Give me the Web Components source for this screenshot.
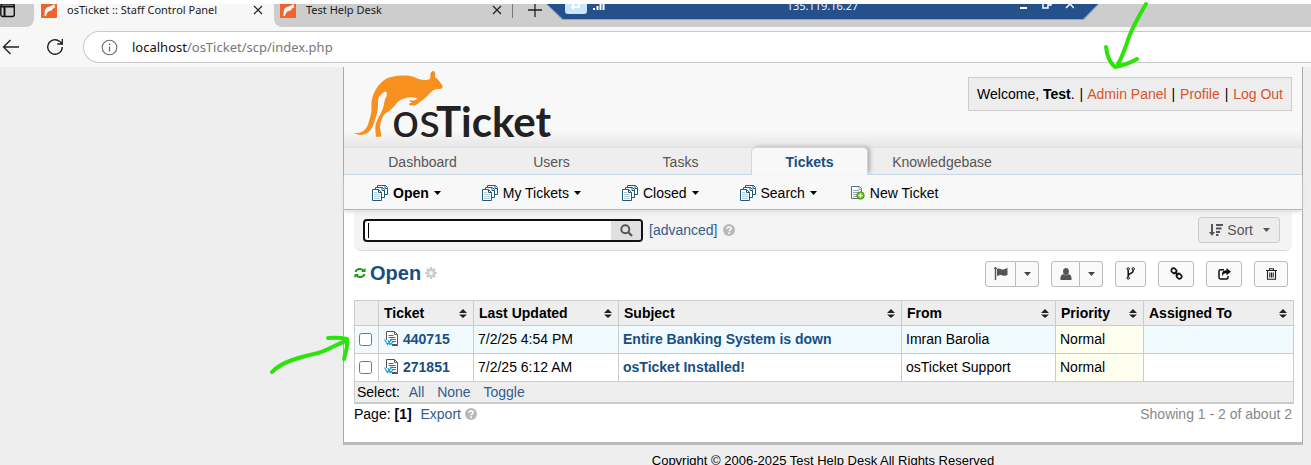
<!DOCTYPE html>
<html lang="en">
<head>
<meta charset="utf-8">
<title>osTicket :: Staff Control Panel</title>
<style>
html,body{margin:0;height:100%;overflow:hidden}
body{background:#eee;font:14px/16px "Liberation Sans",Arial,sans-serif;color:#000;position:relative}
</style>
</head>
<body>
<browser-chrome></browser-chrome>
<ot-page>
  <ot-header slot="head"></ot-header>
  <ot-nav slot="head"></ot-nav>
  <ot-subnav slot="head"></ot-subnav>
  <ot-search></ot-search>
  <ot-toolbar></ot-toolbar>
  <ot-queue></ot-queue>
  <ot-pager></ot-pager>
</ot-page>
<ot-footer>Copyright © 2006-2025 Test Help Desk All Rights Reserved</ot-footer>
<ink-arrows></ink-arrows>
<script>
const define = (name, html, setup) => customElements.define(name, class extends HTMLElement {
  connectedCallback() {
    if (this.shadowRoot) return;
    const root = this.attachShadow({mode: 'open'});
    const t = document.createElement('template');
    t.innerHTML = html;
    root.append(t.content.cloneNode(true));
    if (setup) setup(this, root);
  }
});

const stack = `<g stroke="#1b5c7e" fill="#fff"><path d="M5.500 .5h8l2 2v7h-10zM13 .5v3h2.500"/><path d="M3.500 2.500h7l2 2v8h-9zM10 2.500v3h2.500"/><path d="M.5 4.500h6l3 3v8h-9z"/></g><path d="M6.500 4.500v3h3" fill="none" stroke="#1b5c7e"/><path d="M2 7.500h3M2 9.500h6M2 11.500h6M2 13.500h6" stroke="#b6c8d0"/>`;
const icons = {
  panel: [16,16,`<rect x=".8" y="2" width="13.500" height="12.500" rx="2" fill="none" stroke="#111" stroke-width="1.400"/><path d="M1 4.500h13M4.500 4.500v10" stroke="#111" stroke-width="2"/>`],
  logo: [16,16,`<rect width="16" height="16" rx="1" fill="#f1632a"/><path d="M1.500 14c2 0 2.200-2 2.200-4C3.800 6.500 6 5 9 4.500L12 3l2-1-.5 2 1 1.500-2 .5-2 2.500-2 .5C7 9.500 5.500 11 5 14l-1 .3c-.5-1 .3-2.300.3-2.300s-1 2.300-2.800 2z" fill="#fff"/>`],
  close: [10,10,`<path d="M1 1l8 8M9 1L1 9" stroke="#222" stroke-width="1.200"/>`],
  plus: [14,14,`<path d="M7 0v14M0 7h14" stroke="#222" stroke-width="1.300"/>`],
  back: [18,16,`<path d="M17 8H2M8.500 1L1.500 8l7 7" fill="none" stroke="#222" stroke-width="1.400"/>`],
  reload: [18,18,`<path d="M16.300 9A7.300 7.300 0 1 1 13.800 3.500L16 5.500M16.300 1v5h-5" fill="none" stroke="#222" stroke-width="1.400"/>`],
  info: [17,17,`<circle cx="8.500" cy="8.500" r="7.300" fill="none" stroke="#6b6b6b" stroke-width="1.100"/><path d="M8.500 7.500v5M8.500 4.500v1.500" stroke="#6b6b6b" stroke-width="1.300"/>`],
  stack: [16,16,stack],
  newdoc: [15,16,`<path d="M1.500 1.500h8l2 2v10h-10z" fill="#fff" stroke="#5d6f86"/><path d="M9 1.500v3h2.500M3 5.500h6M3 7.500h6M3 9.500h4M3 11.500h4" stroke="#92a5bb" fill="none"/><circle cx="10.500" cy="10.500" r="3.800" fill="#68b51c" stroke="#3f8a10" stroke-width=".7"/><path d="M10.500 8.300v4.400M8.300 10.500h4.400" stroke="#e9ffd4" stroke-width="1.400"/>`],
  caret: [7,4,`<path d="M0 0h7L3.500 4z" fill="currentColor"/>`],
  search: [13,13,`<circle cx="5.300" cy="5.300" r="4" fill="none" stroke="#555" stroke-width="1.900"/><path d="M8.300 8.300l3.700 3.700" stroke="#555" stroke-width="2.200"/>`],
  help: [12,12,`<circle cx="6" cy="6" r="6" fill="#b9b9b9"/><path d="M4 4.800C4 2.300 8.200 2.500 8 4.700 7.900 5.900 6.100 5.900 6.100 7.300M6.100 8.300v1.600" fill="none" stroke="#fff" stroke-width="1.600"/>`],
  sort: [14,14,`<path d="M3 1v9" stroke="#555" stroke-width="2"/><path d="M0 9h6l-3 4zM7 1h7v2H7zM7 4.500h5.500v2H7zM7 8h4v2H7zM7 11h2.500v2H7z" fill="#555"/>`],
  refresh: [12,12,`<path d="M1.500 5C2.500 1.500 7 1 9.500 3.500M10.500 7C9.500 10.500 5 11 2.500 8.500" fill="none" stroke="#12a012" stroke-width="1.900"/><path d="M11.500 .8v4.300H7.200zM.5 11.200V6.900h4.300z" fill="#12a012"/>`],
  gear: [12,12,`<circle cx="6" cy="6" r="3.200" fill="none" stroke="#ccc" stroke-width="2.600"/><path d="M6 0v2M6 10v2M0 6h2M10 6h2M1.800 1.800l1.400 1.400M8.800 8.800l1.400 1.400M1.800 10.200l1.400-1.400M8.800 3.200l1.400-1.400" stroke="#ccc" stroke-width="2.200"/>`],
  flag: [14,13,`<path d="M1.500 1v12" stroke="#555" stroke-width="1.400"/><circle cx="1.500" cy="1.300" r="1.200" fill="#555"/><path d="M3 2c3-1.500 4 1 6.500.5L13.500 1v7C10 10 8.500 7.500 6 8L3 9z" fill="#555"/>`],
  user: [12,12,`<ellipse cx="6" cy="3.500" rx="2.900" ry="3.500" fill="#555"/><path d="M.5 12C0 8 2 6.300 3.300 6.300c1.500 1.300 3.900 1.300 5.400 0C10 6.300 12 8 11.500 12z" fill="#555"/>`],
  fork: [9,13,`<path d="M2.200 2v9M7.200 2v2c0 2.500-5 2-5 5" fill="none" stroke="#111" stroke-width="1.500"/><g fill="#fff" stroke="#111"><circle cx="2.200" cy="1.900" r="1.200"/><circle cx="7.200" cy="1.900" r="1.200"/><circle cx="2.200" cy="11" r="1.200"/></g>`],
  link: [13,13,`<g fill="none" stroke="#111" stroke-width="1.700"><rect x="1.200" y="1.600" width="5.400" height="4.400" rx="2.200" transform="rotate(45 3.900 3.800)"/><rect x="6.400" y="7" width="5.400" height="4.400" rx="2.200" transform="rotate(45 9.100 9.200)"/><path d="M4.800 4.800l3.500 3.500"/></g>`],
  share: [13,12,`<path d="M6 1.800H2.500Q1 1.800 1 3.300v6Q1 11 2.500 11h6Q10 11 10 9.500V8" fill="none" stroke="#111" stroke-width="1.500"/><path d="M8.500 0L13 3.700 8.500 7.200V5.200C6 5 5 6 4.500 8.500 3.300 5 4.500 2.200 8.500 2.200z" fill="#111"/>`],
  trash: [11,12,`<path d="M0 2.500h11M3.500 2.500V.8h4v1.700M1.500 3v8.200h8V3M3.800 4.500v5M5.500 4.500v5M7.200 4.500v5" fill="none" stroke="#222" stroke-width="1.100"/>`],
  updown: [8,9,`<path d="M0 4L4 0l4 4zM0 5.500h8L4 9z" fill="#222"/>`],
  ticket: [15,15,`<path d="M2.500 9V.5h8l3 3v10h-6" fill="#fff" stroke="#555"/><path d="M10.500 .5v3h3M4.500 4.500h5M4.500 6.500h7M6 8.500h6M8 10.500h4" stroke="#666" fill="none"/><path d="M8 14.500h6" stroke="#555"/><path d="M.5 8.500l3 5 5-6M4 9l2 4.500L9 11" fill="none" stroke="#1d9fd6" stroke-width="1.200"/>`]
};
customElements.define('ot-icon', class extends HTMLElement {
  connectedCallback() {
    if (this.shadowRoot) return;
    const [w, h, body] = icons[this.getAttribute('name')];
    this.attachShadow({mode: 'open'}).innerHTML =
      `<style>:host{display:inline-flex;flex:none}svg{display:block}</style><svg width="${w}" height="${h}" viewBox="0 0 ${w} ${h}" aria-hidden="true">${body}</svg>`;
  }
});

define('remote-bar', `<style>
:host{display:block;width:553px;height:16px;overflow:hidden;background:#8fa5c6;clip-path:polygon(0 0,100% 0,538px 100%,16px 100%)}
.in{box-sizing:border-box;height:15px;background:#24508c;clip-path:polygon(1px 0,552px 0,537px 100%,17px 100%);display:grid;grid-template-columns:1fr auto 1fr;color:#fff;font:11px/12px "Open Sans",sans-serif}
.l{padding-left:19px;display:flex;gap:6px}
.pin{width:22px;height:10px;background:#cbe5fb;border-radius:0 0 3px 3px}
.t{margin-top:-4px}
.r{display:flex;justify-content:flex-end;padding-right:25px}
svg{display:block}
</style><div class="in"><div class="l"><span class="pin"><svg width="22" height="10"><path d="M6 3h8M14 0v4M8 0v5" stroke="#fff" stroke-width="2"/></svg></span><svg width="12" height="7"><path d="M1 4v2M4.500 2v4M7.500 0v6M10.500 0v6" stroke="#fff" stroke-width="2"/></svg></div><span class="t">135.119.16.27</span>
<div class="r"><svg width="54" height="6"><path d="M0 4h7" stroke="#fff" stroke-width="2"/><path d="M23 0v4h5V0M28 1h3V0M46 4l4-4 4 4" fill="none" stroke="#fff" stroke-width="1.500"/></svg></div></div>`);

define('browser-chrome', `<style>
:host{display:block;background:#f7f7f7;padding-top:4px;box-shadow:inset 0 4px #fff;font-family:"Noto Sans","Open Sans",sans-serif;color:#1b1b1b;position:relative}
.tabs{display:flex;height:23px;overflow:hidden;font-size:11px;line-height:12px}
.tabs>*{box-sizing:border-box;height:23px;padding-bottom:11px;display:flex;align-items:center}
.first{width:34px;background:#cdcdcd;border-radius:0 0 8px 0}
.tab{width:240px;padding-left:7px;padding-right:11px;gap:10px}
.tab span{flex:1;white-space:nowrap}
.rest{flex:1;background:#cdcdcd;border-radius:0 0 0 8px}
.rest .tab{display:flex;align-items:center;width:239px;box-sizing:border-box;padding-left:6px;padding-right:10px;border-right:1px solid #777;height:16px}
.rest ot-icon[name=plus]{margin-left:15px}
.bar{display:flex;align-items:center;height:40px}
.bar>ot-icon[name=back]{margin-left:2px;width:44px}
.bar>ot-icon[name=reload]{width:37px}
.url{box-sizing:border-box;flex:1;height:32px;border:1px solid #c9c9c9;border-right:0;border-radius:16px 0 0 16px;background:#fff;display:flex;align-items:center;gap:14px;padding-left:17px;font-size:13px;color:#777}
.url b{font-weight:400;color:#111}
remote-bar{position:absolute;left:546px;top:4px}
</style><div class="tabs"><div class="first"><ot-icon name="panel"></ot-icon></div>
<div class="tab"><ot-icon name="logo"></ot-icon><span>osTicket :: Staff Control Panel</span><ot-icon name="close"></ot-icon></div>
<div class="rest"><div class="tab"><ot-icon name="logo"></ot-icon><span>Test Help Desk</span><ot-icon name="close"></ot-icon></div><ot-icon name="plus"></ot-icon></div></div>
<div class="bar"><ot-icon name="back"></ot-icon><ot-icon name="reload"></ot-icon><div class="url"><ot-icon name="info"></ot-icon><span><b>localhost</b>/osTicket/scp/index.php</span></div></div>
<remote-bar></remote-bar>`);

define('ot-page', `<style>
:host{display:block;box-sizing:border-box;max-width:960px;margin:0 8px 0 auto;background:#fff;border:1px solid #aaa;border-top:0;border-bottom:3px solid #bbb}
.body{padding:0 8px 18px 10px}
</style><slot name="head"></slot><div class="body"><slot></slot></div>`);

define('ot-header', `<style>
:host{display:flex;justify-content:space-between;align-items:flex-start;height:80px;background:linear-gradient(#f8f8f8 80%,#e6e6e6);padding:0 10px 0 9px}
.logo{position:relative;width:200px;height:76px;display:block;color:#222}
svg{position:absolute;left:0;top:1px}
.word{position:absolute;left:39px;top:28px;display:flex;align-items:baseline;line-height:48px;white-space:nowrap}
.os{font:400 48px/48px Lato,sans-serif}
.tk{font:bold 42px/48px "Lato",sans-serif;margin-left:-4px}
.me{margin-top:10px;box-sizing:border-box;height:34px;padding:8px;border:1px solid #ccc;background:#ededed;font-size:14px;line-height:16px;white-space:nowrap}
.me i{font-style:normal;margin:0 1px}
.me a{color:#d9532c;text-decoration:none}
</style><a class="logo" href="#" aria-label="osTicket"><span class="word"><span class="os">os</span><span class="tk">Ticket</span></span>
<svg width="92" height="72" viewBox="7 9 276 216" fill="#f7901e"><path d="M10 203C32 208 48 196 54 172C60 150 64 142 62 122C62 90 80 58 105 42C125 32 165 28 190 36C205 42 215 48 232 44C240 42 239 38 239 32C239 24 242 16 250 18C255 22 254 30 253 36C262 42 268 52 276 62C277 70 270 73 262 72C252 72 244 78 236 86C226 98 215 106 206 112C200 120 190 124 176 120C172 116 180 114 186 112C178 112 172 108 180 106C190 108 196 106 200 100C180 92 155 100 142 110C130 125 115 140 103 146C94 155 90 170 88 185C88 200 95 208 90 215L75 215C77 205 72 195 75 178C80 160 92 145 97 130C101 118 100 105 108 92C110 84 108 79 102 80C92 86 82 95 82 110C84 130 78 150 72 168C66 190 55 206 36 209C26 211 16 208 10 203Z"/></svg></a>
<div class="me">Welcome, <strong>Test</strong>. <i>|</i> <a href="#">Admin Panel</a> <i>|</i> <a href="#">Profile</a> <i>|</i> <a href="#">Log Out</a></div>`);

define('ot-nav', `<style>
:host{display:flex;gap:12px;height:28px;box-sizing:border-box;padding-left:20px;background:#eee;box-shadow:inset 0 1px #e2e2e2,inset 0 -1px #c5d9e8}
a{width:117px;box-sizing:border-box;text-align:center;line-height:30px;color:#555;text-decoration:none}
a:last-child{width:124px}
.on{background:#f8f8f8;border:1px solid #c5d9e8;border-bottom:0;border-radius:5px 5px 0 0;color:#184e81;font-weight:bold;line-height:28px;box-shadow:3px -1px 4px -1px #aaa;clip-path:inset(-4px -8px 0 -4px)}
</style><a href="#">Dashboard</a><a href="#">Users</a><a href="#">Tasks</a><a class="on" href="#">Tickets</a><a href="#">Knowledgebase</a>`);

define('ot-subnav', `<style>
:host{display:flex;gap:33px;height:35px;box-sizing:border-box;align-items:center;padding:2px 0 0 28px;background:#f8f8f8;border-bottom:1px solid #b5b5b5;position:relative;box-shadow:0 2px 4px #ddd}
a{display:flex;align-items:center;gap:5px;padding-right:8px;color:#000;text-decoration:none;white-space:nowrap}
a:nth-of-type(4){padding-right:0}
</style><a href="#"><ot-icon name="stack"></ot-icon><b>Open</b><ot-icon name="caret"></ot-icon></a><a href="#"><ot-icon name="stack"></ot-icon>My Tickets<ot-icon name="caret"></ot-icon></a><a href="#"><ot-icon name="stack"></ot-icon>Closed<ot-icon name="caret"></ot-icon></a><a href="#"><ot-icon name="stack"></ot-icon>Search<ot-icon name="caret"></ot-icon></a><a href="#"><ot-icon name="newdoc"></ot-icon>New Ticket</a>`);

define('ot-search', `<style>
:host{display:flex;align-items:center;height:41px;box-sizing:border-box;margin-right:2px;padding:0 12px 0 9px;background:#f4f4f4;border-bottom:1px dotted #bbb;border-radius:0 0 8px 8px}
.box{display:flex;box-sizing:border-box;width:280px;height:23px;border:2px solid #111;border-radius:4px;background:#fff;overflow:hidden;align-items:center}
.box i{width:1px;height:15px;margin-left:3px;background:#000}
input{flex:1;min-width:0;border:0;outline:0;padding:0 2px;background:none;font:inherit}
.box button{width:30px;height:19px;border:0;padding:0;background:#e0e0e0;display:flex;align-items:center;justify-content:center}
a{color:#345c8c;text-decoration:none;margin:0 5px 0 6px}
.sort{margin-left:auto;display:flex;align-items:center;height:26px;box-sizing:border-box;border:1px solid #ccc;border-radius:3px;background:#ececec;color:#555;font:inherit;padding:0 9px 0 10px;gap:4px}
.sort ot-icon[name=caret]{margin-left:6px}
</style><form class="box" role="search"><i></i><input type="text" aria-label="Search tickets"><button type="button" aria-label="Search"><ot-icon name="search"></ot-icon></button></form><a href="#">[advanced]</a><ot-icon name="help"></ot-icon><button class="sort" type="button"><ot-icon name="sort"></ot-icon>Sort<ot-icon name="caret"></ot-icon></button>`);

define('ot-toolbar', `<style>
:host{display:flex;align-items:center;height:49px;gap:12px;padding:0 6px 4px 0;box-sizing:border-box}
h2{margin:0 auto 0 0;padding-bottom:2px;font-size:20px;line-height:24px;display:flex;align-items:center;gap:4px;color:#184e81}
a{color:inherit;text-decoration:none}
div{display:flex}
button{box-sizing:border-box;height:26px;border:1px solid #bbb;border-radius:3px;background:#fafafa;padding:0;display:flex;align-items:center;justify-content:center;color:#444}
.m{width:31px;border-radius:3px 0 0 3px}.n{width:29px;border-radius:3px 0 0 3px}
.d{width:23px;border-left:0;border-radius:0 3px 3px 0}
.s{width:31px}.w{width:36px}.t{width:34px}
</style><h2><ot-icon name="refresh"></ot-icon><a href="#">Open</a><ot-icon name="gear"></ot-icon></h2>
<div><button class="m" aria-label="Flag"><ot-icon name="flag"></ot-icon></button><button class="d" aria-label="Flag options"><ot-icon name="caret"></ot-icon></button></div>
<div><button class="n" aria-label="Assign"><ot-icon name="user"></ot-icon></button><button class="d" aria-label="Assign options"><ot-icon name="caret"></ot-icon></button></div>
<button class="s" aria-label="Merge"><ot-icon name="fork"></ot-icon></button><button class="w" aria-label="Link"><ot-icon name="link"></ot-icon></button><button class="w" aria-label="Transfer"><ot-icon name="share"></ot-icon></button><button class="t" aria-label="Delete"><ot-icon name="trash"></ot-icon></button>`);

define('ot-queue', `<style>
:host{display:block}
table{width:100%;border-collapse:collapse;table-layout:fixed;border-bottom:2px solid #ccc}
th,td{border:1px solid #ccc;padding:0 4px;text-align:left;white-space:nowrap}
th{height:24px;background:#eee;padding:0 6px 0 5px}
th>div{display:flex;justify-content:space-between;align-items:center}
tbody td{height:25px;padding-bottom:2px}
tbody tr:first-child td{background:#f0faff}
tbody tr td.p,tbody tr:first-child td.p{background:#fffff0}
tbody td.c{padding:0 2px 2px 0;text-align:center}
input{width:13px;height:13px;margin:0;vertical-align:middle}
a{color:#184e81;text-decoration:none}
td a{font-weight:bold}
.n{display:flex;align-items:center;gap:4px;padding-left:1px}
tfoot td{height:20px;background:#eee;padding:0 2px;border-bottom:2px solid #ccc}
tfoot a{font-weight:400;margin-left:9px;color:#345c8c}
tfoot a:first-of-type{margin-left:5px}
</style><table><colgroup><col style="width:24px"><col style="width:95px"><col style="width:145px"><col><col style="width:154px"><col style="width:88px"><col style="width:150px"></colgroup>
<thead><tr><th></th></tr></thead><tbody></tbody><tfoot><tr><td colspan="7">Select: <a href="#">All</a> <a href="#">None</a> <a href="#">Toggle</a></td></tr></tfoot></table>`, (el, root) => {
  root.querySelector('thead tr').insertAdjacentHTML('beforeend', ['Ticket','Last Updated','Subject','From','Priority','Assigned To'].map(t => `<th><div>${t}<ot-icon name="updown"></ot-icon></div></th>`).join(''));
  root.querySelector('tbody').innerHTML = [
    ['440715','7/2/25 4:54 PM','Entire Banking System is down','Imran Barolia'],
    ['271851','7/2/25 6:12 AM','osTicket Installed!','osTicket Support']
  ].map(r => `<tr><td class="c"><input type="checkbox" aria-label="Select ticket ${r[0]}"></td><td><div class="n"><ot-icon name="ticket"></ot-icon><a href="#">${r[0]}</a></div></td><td>${r[1]}</td><td><a href="#">${r[2]}</a></td><td>${r[3]}</td><td class="p">Normal</td><td></td></tr>`).join('');
});

define('ot-pager', `<style>
:host{display:flex;align-items:center;height:20px;padding-right:2px;gap:4px}
a{color:#345c8c;text-decoration:none;margin-left:5px}
span{margin-left:auto;color:#888}
</style><div>Page: <b>[1]</b> <a href="#">Export</a></div><ot-icon name="help"></ot-icon><span>Showing 1 - 2 of about 2</span>`);

define('ot-footer', `<style>:host{display:block;max-width:960px;margin:8px 8px 0 auto;text-align:center;font-size:13px;line-height:16px}</style><slot></slot>`);

define('ink-arrows', `<style>:host{position:absolute;left:0;top:0;pointer-events:none}svg{display:block}</style>
<svg width="1311" height="465" fill="none" stroke="#2de30c" stroke-width="4" stroke-linecap="round" stroke-linejoin="round"><path d="M1146 4C1138 18 1130 31 1127 43C1124 51 1121 60 1118 64M1106 47C1107 56 1110 63 1115 67Q1126 65 1137 59"/><path d="M272 372C281 362 300 357 318 353C328 350 337 344 346 341M328 338Q338 337 347 339Q348 346 344 359"/></svg>`);
</script>
</body>
</html>
